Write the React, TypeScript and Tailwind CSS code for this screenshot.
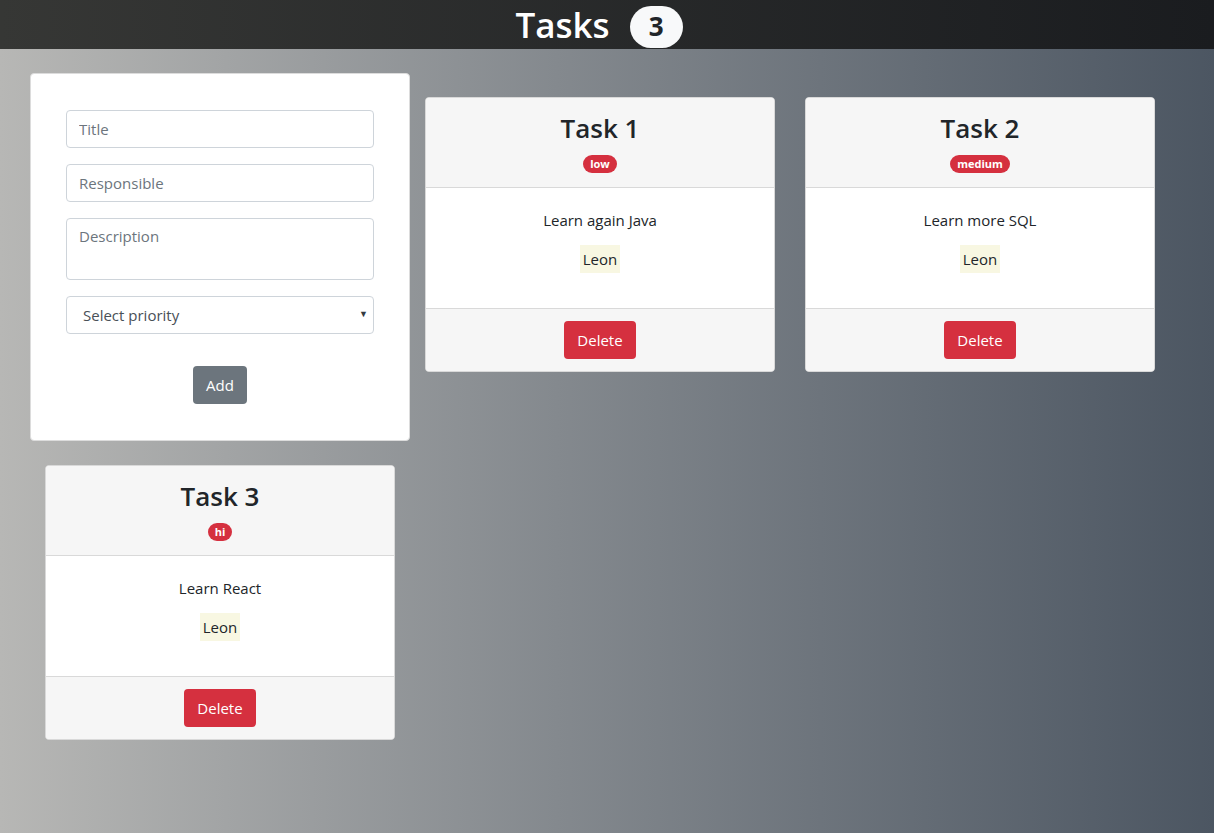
const tasks = [
  { title: 'Task 1', priority: 'low', description: 'Learn again Java', responsible: 'Leon' },
  { title: 'Task 2', priority: 'medium', description: 'Learn more SQL', responsible: 'Leon' },
  { title: 'Task 3', priority: 'hi', description: 'Learn React', responsible: 'Leon' },
];

const font = { fontFamily: '"Open Sans", "Noto Sans", sans-serif' };

const TaskForm = () => (
  <div className="bg-white border border-[#dcdcdc] rounded-[4px] h-[368px] pt-[36px] px-[35px]">
    <input
      placeholder="Title"
      className="block w-full h-[38px] px-3 border border-[#ced4da] rounded-[4px] text-[15px] text-[#495057] placeholder:text-[#6c757d] outline-none"
    />
    <input
      placeholder="Responsible"
      className="block w-full h-[38px] px-3 mt-4 border border-[#ced4da] rounded-[4px] text-[15px] text-[#495057] placeholder:text-[#6c757d] outline-none"
    />
    <textarea
      placeholder="Description"
      className="block w-full h-[62px] px-3 py-[6px] mt-4 border border-[#ced4da] rounded-[4px] text-[15px] text-[#495057] placeholder:text-[#6c757d] outline-none resize-none"
    />
    <div className="relative mt-4">
      <select className="block w-full h-[38px] pl-4 pr-8 border border-[#ced4da] rounded-[4px] bg-white text-[15px] text-[#495057] appearance-none outline-none">
        <option>Select priority</option>
        <option>low</option>
        <option>medium</option>
        <option>hi</option>
      </select>
      <span className="absolute right-[6px] top-[11px] text-[9px] text-[#343a40] pointer-events-none">▼</span>
    </div>
    <div className="flex justify-center mt-8">
      <button className="h-[38px] px-[13px] bg-[#6c757d] text-white text-[15px] rounded-[4px]">Add</button>
    </div>
  </div>
);

const TaskCard = ({ task }: { task: (typeof tasks)[number] }) => (
  <div className="mx-[15px] mt-6 border border-[#d9d9d9] rounded-[4px] bg-white overflow-hidden text-center">
    <div className="h-[90px] bg-[#f6f6f6] border-b border-[#d9d9d9] flex flex-col items-center pt-[10px]">
      <h3 className="text-[26px] font-semibold text-[#212529] leading-[40px]">{task.title}</h3>
      <span className="mt-[7px] px-[7px] h-[18px] leading-[18px] rounded-full bg-[#d5303f] text-white text-[11px] font-bold">
        {task.priority}
      </span>
    </div>
    <div className="h-[121px] bg-white border-b border-[#d9d9d9] pt-[20px]">
      <p className="text-[15px] text-[#212529] leading-[24px]">{task.description}</p>
      <p className="mt-[15px]">
        <mark className="bg-[#f8f7e2] text-[#212529] text-[15px] px-[3px] py-[4px]">{task.responsible}</mark>
      </p>
    </div>
    <div className="h-[62px] bg-[#f6f6f6] flex items-center justify-center">
      <button className="h-[38px] px-[13px] bg-[#d5303f] text-white text-[15px] rounded-[4px]">Delete</button>
    </div>
  </div>
);

export default function App() {
  return (
    <div style={font} className="min-h-[833px] bg-gradient-to-r from-[#b7b7b5] to-[#4c5662]">
      <header className="h-[49px] bg-gradient-to-r from-[#363735] to-[#1a1c1f] flex items-center justify-center gap-5 pr-[16px]">
        <h1 className="text-[35px] font-semibold text-white leading-none">Tasks</h1>
        <span className="h-[42px] px-[19px] rounded-full bg-[#f8f9fa] text-[#212529] text-[26px] font-bold flex items-center mt-[4px]">
          3
        </span>
      </header>
      <main className="pl-[30px] w-[1170px] grid grid-cols-3 items-start pt-6 pb-20">
        <TaskForm />
        {tasks.map((t) => (
          <TaskCard key={t.title} task={t} />
        ))}
      </main>
    </div>
  );
}
